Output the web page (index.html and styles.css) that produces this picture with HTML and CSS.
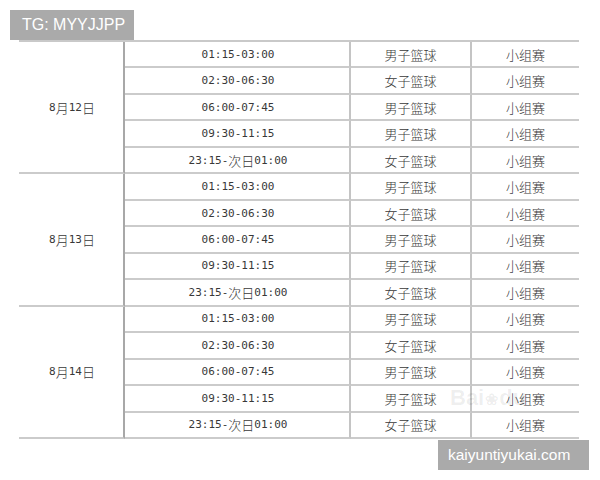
FILE: index.html
```html
<!DOCTYPE html>
<html lang="zh">
<head>
<meta charset="utf-8">
<title>赛程</title>
<link rel="stylesheet" href="styles.css">
</head>
<body>
<div class="page">
  <div class="sched">
    <div class="c date"><span class="n">8</span>月<span class="n">12</span>日</div>
    <div class="c time"><span class="n">01:15-03:00</span></div><div class="c ev">男子篮球</div><div class="c st">小组赛</div>
    <div class="c time"><span class="n">02:30-06:30</span></div><div class="c ev">女子篮球</div><div class="c st">小组赛</div>
    <div class="c time"><span class="n">06:00-07:45</span></div><div class="c ev">男子篮球</div><div class="c st">小组赛</div>
    <div class="c time"><span class="n">09:30-11:15</span></div><div class="c ev">男子篮球</div><div class="c st">小组赛</div>
    <div class="c time"><span class="n">23:15-</span>次日<span class="n">01:00</span></div><div class="c ev">女子篮球</div><div class="c st">小组赛</div>

    <div class="c date"><span class="n">8</span>月<span class="n">13</span>日</div>
    <div class="c time"><span class="n">01:15-03:00</span></div><div class="c ev">男子篮球</div><div class="c st">小组赛</div>
    <div class="c time"><span class="n">02:30-06:30</span></div><div class="c ev">女子篮球</div><div class="c st">小组赛</div>
    <div class="c time"><span class="n">06:00-07:45</span></div><div class="c ev">男子篮球</div><div class="c st">小组赛</div>
    <div class="c time"><span class="n">09:30-11:15</span></div><div class="c ev">男子篮球</div><div class="c st">小组赛</div>
    <div class="c time"><span class="n">23:15-</span>次日<span class="n">01:00</span></div><div class="c ev">女子篮球</div><div class="c st">小组赛</div>

    <div class="c date"><span class="n">8</span>月<span class="n">14</span>日</div>
    <div class="c time"><span class="n">01:15-03:00</span></div><div class="c ev">男子篮球</div><div class="c st">小组赛</div>
    <div class="c time"><span class="n">02:30-06:30</span></div><div class="c ev">女子篮球</div><div class="c st">小组赛</div>
    <div class="c time"><span class="n">06:00-07:45</span></div><div class="c ev">男子篮球</div><div class="c st">小组赛</div>
    <div class="c time"><span class="n">09:30-11:15</span></div><div class="c ev">男子篮球</div><div class="c st">小组赛</div>
    <div class="c time"><span class="n">23:15-</span>次日<span class="n">01:00</span></div><div class="c ev">女子篮球</div><div class="c st">小组赛</div>
  </div>

  <div class="wm">Bai<span class="paw">&#x2740;</span>du</div>

  <div class="badge badge-tl">TG: MYYJJPP</div>
  <div class="badge badge-br">kaiyuntiyukai.com</div>
</div>
</body>
</html>
```

FILE: styles.css
```css
html, body {
  margin: 0;
  padding: 0;
  background: #ffffff;
}

.page {
  position: relative;
  width: 600px;
  height: 480px;
  overflow: hidden;
  font-family: "Noto Sans CJK SC", "Noto Sans", sans-serif;
  color: #383838;
}

.sched {
  display: grid;
  grid-template-columns: 106px 226px 121px 107px;
  grid-auto-rows: 26.47px;
  width: 560px;
  margin: 40px 0 0 19px;
  border-top: 2px solid #c9c9c9;
}

.c {
  box-sizing: border-box;
  display: flex;
  align-items: center;
  justify-content: center;
  font-size: 13px;
  font-weight: 300;
  line-height: 1;
  border-bottom: 2px solid #cbcbcb;
  white-space: nowrap;
}

.date {
  grid-column: 1;
  grid-row: span 5;
  border-right: 2px solid #a8a8a8;
  padding-left: 2px;
}

.time,
.ev {
  border-right: 2px solid #c4c4c4;
}

.time {
  padding-left: 2px;
}

.n {
  font-family: "DejaVu Sans Mono", "Liberation Mono", monospace;
  font-size: 11px;
  font-weight: normal;
}

.badge {
  position: absolute;
  box-sizing: border-box;
  height: 30px;
  display: flex;
  align-items: center;
  background: #aaaaaa;
  color: #ffffff;
  font-family: "Liberation Sans", Arial, sans-serif;
  font-size: 16px;
}

.badge-tl {
  left: 10px;
  top: 10px;
  width: 124px;
  padding-left: 12px;
}

.badge-br {
  left: 438px;
  top: 440px;
  width: 151px;
  padding-left: 10px;
  font-size: 15.5px;
}

.wm {
  position: absolute;
  left: 450px;
  top: 386px;
  color: rgba(0, 0, 0, 0.07);
  font-family: "Liberation Sans", Arial, sans-serif;
  font-size: 22px;
  font-weight: bold;
  line-height: 24px;
}

.paw {
  font-size: 16px;
  margin: 0 1px;
}
```
